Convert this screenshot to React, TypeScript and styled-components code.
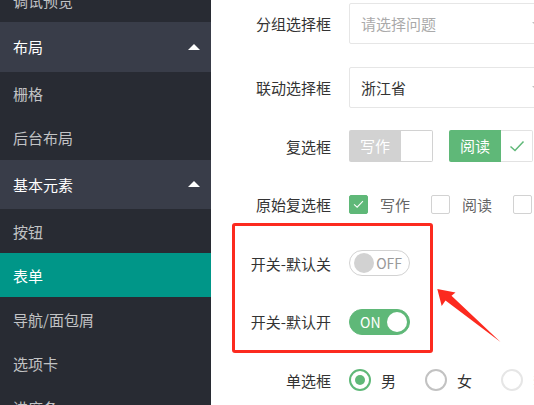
import React from "react";
import styled, { createGlobalStyle } from "styled-components";

const GlobalStyle = createGlobalStyle`
  html, body {
    margin: 0;
    padding: 0;
    height: 405px;
    overflow: hidden;
    background: #fff;
  }
  * {
    box-sizing: border-box;
  }
  body {
    font-family: "Noto Sans CJK SC", "Liberation Sans", sans-serif;
    font-size: 15px;
  }
`;

const Page = styled.div`
  display: flex;
  height: 405px;
  overflow: hidden;
`;

const Sidebar = styled.div`
  width: 211px;
  flex-shrink: 0;
  background: #282b33;
  overflow: hidden;
`;

const NavList = styled.div`
  display: flex;
  flex-direction: column;
  margin-top: -22px;
`;

const NavParent = styled.div`
  display: flex;
  align-items: center;
  justify-content: space-between;
  height: 49.5px;
  padding: 0 11px 0 13px;
  background: #393d49;
  color: #fff;
`;

const Caret = styled.span`
  width: 0;
  height: 0;
  border-left: 6px solid transparent;
  border-right: 6px solid transparent;
  border-bottom: 6px solid #fff;
`;

const NavChild = styled.div<{ $active?: boolean }>`
  display: flex;
  align-items: center;
  height: 44px;
  padding-left: 13px;
  background: ${(p) => (p.$active ? "#009688" : "transparent")};
  color: ${(p) => (p.$active ? "#fff" : "rgba(255, 255, 255, 0.72)")};
`;

const Content = styled.div`
  position: relative;
  flex: 1;
  overflow: hidden;
  padding-top: 3px;
`;

const Row = styled.div<{ $h: number; $mb?: number }>`
  display: flex;
  align-items: center;
  height: ${(p) => p.$h}px;
  margin-bottom: ${(p) => p.$mb ?? 0}px;
`;

const Label = styled.div`
  width: 120px;
  flex-shrink: 0;
  margin-right: 18px;
  text-align: right;
  color: #333;
  white-space: nowrap;
`;

const Controls = styled.div<{ $gap?: number }>`
  display: flex;
  align-items: center;
  gap: ${(p) => p.$gap ?? 0}px;
  white-space: nowrap;
`;

const SelectBox = styled.div<{ $placeholder?: boolean }>`
  position: relative;
  flex-shrink: 0;
  width: 206px;
  height: 41px;
  display: flex;
  align-items: center;
  padding-left: 11px;
  border: 1px solid #e6e6e6;
  border-radius: 2px;
  color: ${(p) => (p.$placeholder ? "#aaa" : "#333")};

  &::after {
    content: "";
    position: absolute;
    right: 10px;
    top: 18px;
    border-left: 6px solid transparent;
    border-right: 6px solid transparent;
    border-top: 6px solid #c2c2c2;
  }
`;

const CheckButton = styled.div`
  display: flex;
  flex-shrink: 0;
  height: 32px;
`;

const CheckButtonText = styled.span<{ $checked?: boolean }>`
  width: 52px;
  line-height: 32px;
  text-align: center;
  color: #fff;
  background: ${(p) => (p.$checked ? "#5fb878" : "#d2d2d2")};
  border-radius: 2px 0 0 2px;
`;

const CheckButtonIcon = styled.span<{ $checked?: boolean }>`
  width: 32px;
  display: flex;
  align-items: center;
  justify-content: center;
  border: 1px solid ${(p) => (p.$checked ? "#e2e2e2" : "#d2d2d2")};
  border-left: none;
  border-radius: 0 2px 2px 0;
  background: #fff;
`;

const PlainCheck = styled.div`
  display: flex;
  align-items: center;
  gap: 12px;
  color: #666;
`;

const PlainBox = styled.span<{ $checked?: boolean }>`
  width: 19px;
  height: 19px;
  display: flex;
  align-items: center;
  justify-content: center;
  border: 1px solid ${(p) => (p.$checked ? "#5fb878" : "#d2d2d2")};
  background: ${(p) => (p.$checked ? "#5fb878" : "#fff")};
  border-radius: 2px;
`;

const Switch = styled.div<{ $on?: boolean }>`
  width: 61px;
  height: 26px;
  display: flex;
  align-items: center;
  flex-direction: ${(p) => (p.$on ? "row-reverse" : "row")};
  justify-content: space-between;
  padding: ${(p) => (p.$on ? "0 2px 0 10px" : "0 7px 0 4px")};
  border: 1px solid ${(p) => (p.$on ? "#5fb878" : "#d2d2d2")};
  border-radius: 13px;
  background: ${(p) => (p.$on ? "#5fb878" : "#fff")};
  color: ${(p) => (p.$on ? "#fff" : "#999")};
  font-size: 14px;
  line-height: 1;
`;

const Knob = styled.span<{ $on?: boolean }>`
  width: 20px;
  height: 20px;
  border-radius: 50%;
  background: ${(p) => (p.$on ? "#fff" : "#d2d2d2")};
`;

const Radio = styled.div<{ $disabled?: boolean }>`
  display: flex;
  align-items: center;
  gap: 10px;
  color: ${(p) => (p.$disabled ? "#d2d2d2" : "#333")};
`;

const RadioCircle = styled.span<{ $checked?: boolean; $disabled?: boolean }>`
  width: 22px;
  height: 22px;
  display: flex;
  align-items: center;
  justify-content: center;
  border-radius: 50%;
  border: 2px solid
    ${(p) => (p.$checked ? "#5fb878" : p.$disabled ? "#e6e6e6" : "#c2c2c2")};

  &::after {
    content: "";
    width: 10px;
    height: 10px;
    border-radius: 50%;
    background: ${(p) => (p.$checked ? "#5fb878" : "transparent")};
  }
`;

const Highlight = styled.div`
  position: absolute;
  left: 20.7px;
  top: 223.3px;
  width: 201.6px;
  height: 129.4px;
  border: 3px solid #fc2a1f;
  border-radius: 3px;
  pointer-events: none;
`;

const ArrowLayer = styled.svg`
  position: absolute;
  left: 0;
  top: 0;
  pointer-events: none;
`;

const Tick = ({ color, size }: { color: string; size: number }) => (
  <svg width={size} height={size * 0.75} viewBox="0 0 16 12">
    <path d="M1.5 6.5 L6 10.5 L14.5 1.5" fill="none" stroke={color} strokeWidth="1.5" />
  </svg>
);

export default function App() {
  return (
    <>
      <GlobalStyle />
      <Page>
        <Sidebar>
          <NavList>
            <NavChild>调试预览</NavChild>
            <NavParent>
              布局
              <Caret />
            </NavParent>
            <NavChild>栅格</NavChild>
            <NavChild>后台布局</NavChild>
            <NavParent>
              基本元素
              <Caret />
            </NavParent>
            <NavChild>按钮</NavChild>
            <NavChild $active>表单</NavChild>
            <NavChild>导航/面包屑</NavChild>
            <NavChild>选项卡</NavChild>
            <NavChild>进度条</NavChild>
          </NavList>
        </Sidebar>

        <Content>
          <Row $h={41} $mb={23}>
            <Label>分组选择框</Label>
            <SelectBox $placeholder>请选择问题</SelectBox>
          </Row>

          <Row $h={41} $mb={8.75}>
            <Label>联动选择框</Label>
            <SelectBox>浙江省</SelectBox>
          </Row>

          <Row $h={58.5}>
            <Label>复选框</Label>
            <Controls $gap={16}>
              <CheckButton>
                <CheckButtonText>写作</CheckButtonText>
                <CheckButtonIcon />
              </CheckButton>
              <CheckButton>
                <CheckButtonText $checked>阅读</CheckButtonText>
                <CheckButtonIcon $checked>
                  <Tick color="#5fb878" size={16} />
                </CheckButtonIcon>
              </CheckButton>
            </Controls>
          </Row>

          <Row $h={58.5}>
            <Label>原始复选框</Label>
            <Controls $gap={21}>
              <PlainCheck>
                <PlainBox $checked>
                  <Tick color="#fff" size={11} />
                </PlainBox>
                写作
              </PlainCheck>
              <PlainCheck>
                <PlainBox />
                阅读
              </PlainCheck>
              <PlainCheck>
                <PlainBox />
                游戏
              </PlainCheck>
            </Controls>
          </Row>

          <Row $h={58.5}>
            <Label>开关-默认关</Label>
            <Switch>
              <Knob />
              OFF
            </Switch>
          </Row>

          <Row $h={58.5}>
            <Label>开关-默认开</Label>
            <Switch $on>
              <Knob $on />
              ON
            </Switch>
          </Row>

          <Row $h={58.5}>
            <Label>单选框</Label>
            <Controls $gap={29}>
              <Radio>
                <RadioCircle $checked />男
              </Radio>
              <Radio>
                <RadioCircle />女
              </Radio>
              <Radio $disabled>
                <RadioCircle $disabled />禁用
              </Radio>
            </Controls>
          </Row>

          <Highlight />
          <ArrowLayer width="323" height="405" viewBox="0 0 323 405">
            <polygon
              points="226.3,289 244.5,292.5 240.5,295.8 289.5,342 234.5,300.5 230.7,306"
              fill="#fc2a1f"
            />
          </ArrowLayer>
        </Content>
      </Page>
    </>
  );
}
